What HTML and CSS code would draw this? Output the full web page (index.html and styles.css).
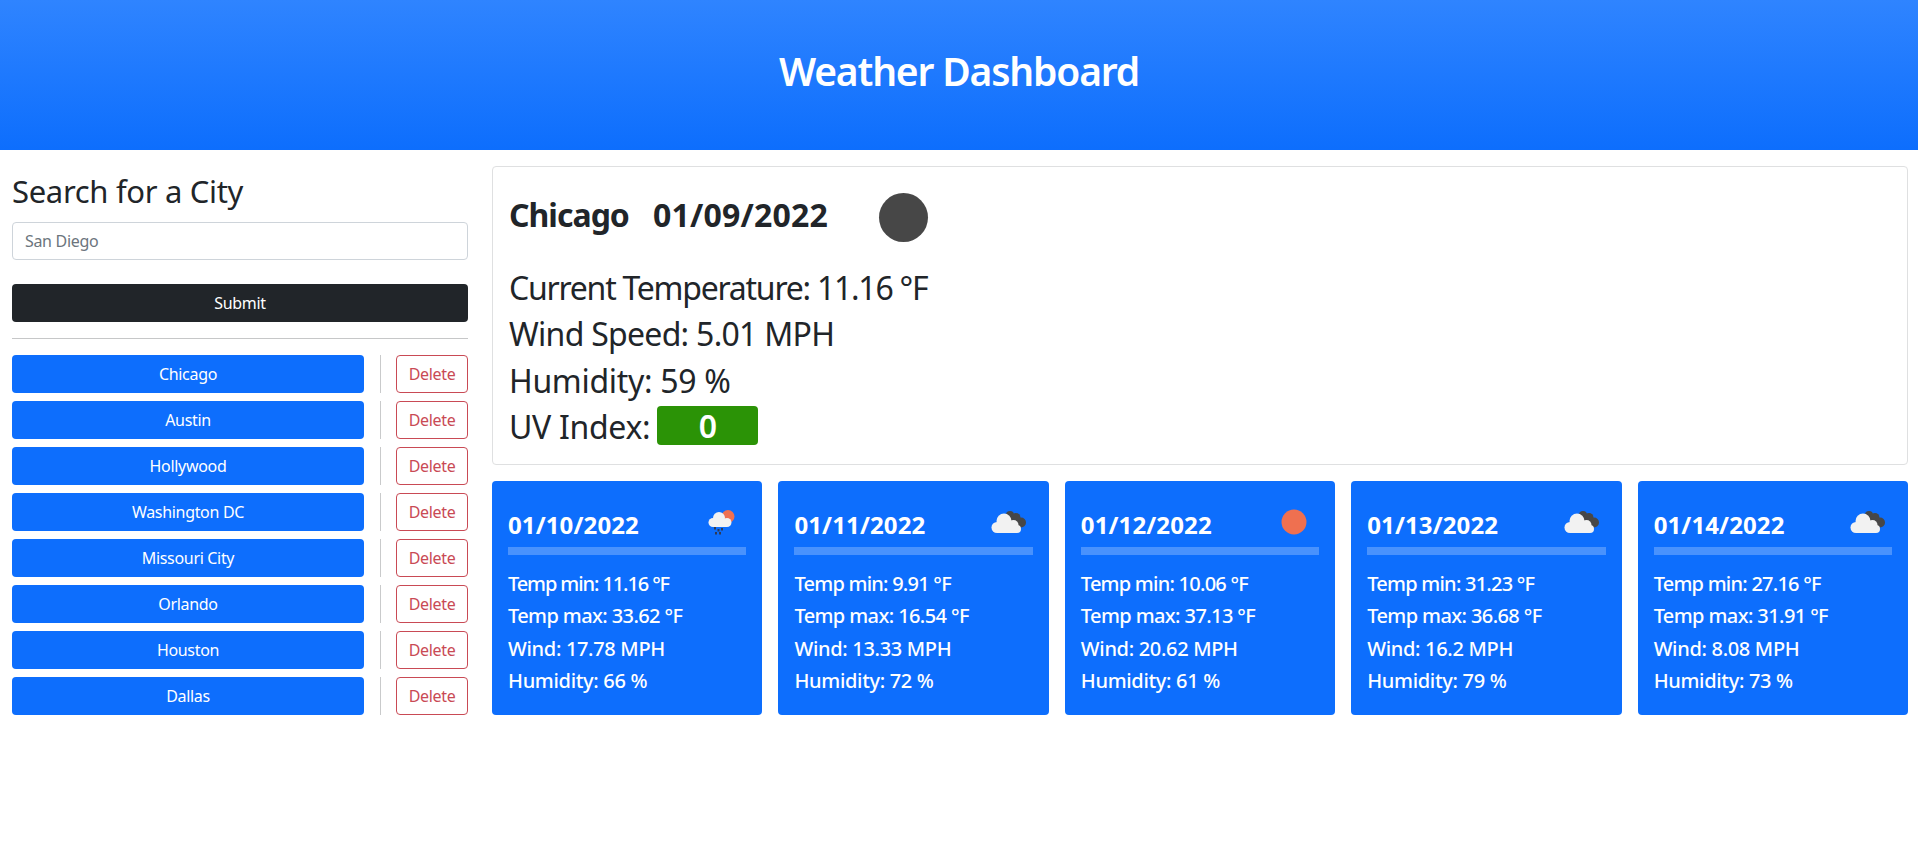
FILE: index.html
```html
<!DOCTYPE html>
<html lang="en">
<head>
<meta charset="utf-8">
<title>Weather Dashboard</title>
<link rel="stylesheet" href="styles.css">
</head>
<body>
<svg class="defs" width="0" height="0" aria-hidden="true">
  <defs>
    <g id="overcast">
      <g fill="#474747"><circle cx="21" cy="9" r="4"/><circle cx="27" cy="11.500" r="4.500"/><circle cx="32" cy="16.500" r="5"/><rect x="20" y="10" width="10" height="10"/></g>
      <g fill="#f2f2f2"><circle cx="8" cy="21.500" r="5.500"/><circle cx="15" cy="15" r="7.500"/><circle cx="24.500" cy="19" r="5"/><circle cx="28" cy="23" r="4"/><rect x="8" y="16" width="20" height="11"/></g>
    </g>
  </defs>
</svg>
<header class="hero"><h1>Weather Dashboard</h1></header>
<div class="layout">
  <aside class="side">
    <h3 class="side-title">Search for a City</h3>
    <div class="field">San Diego</div>
    <button class="submit">Submit</button>
    <hr class="rule">
    <ul class="cities">
      <li class="city"><button class="city-btn">Chicago</button><span class="vr"></span><button class="del">Delete</button></li>
      <li class="city"><button class="city-btn">Austin</button><span class="vr"></span><button class="del">Delete</button></li>
      <li class="city"><button class="city-btn">Hollywood</button><span class="vr"></span><button class="del">Delete</button></li>
      <li class="city"><button class="city-btn">Washington DC</button><span class="vr"></span><button class="del">Delete</button></li>
      <li class="city"><button class="city-btn">Missouri City</button><span class="vr"></span><button class="del">Delete</button></li>
      <li class="city"><button class="city-btn">Orlando</button><span class="vr"></span><button class="del">Delete</button></li>
      <li class="city"><button class="city-btn">Houston</button><span class="vr"></span><button class="del">Delete</button></li>
      <li class="city"><button class="city-btn">Dallas</button><span class="vr"></span><button class="del">Delete</button></li>
    </ul>
  </aside>
  <main class="main">
    <section class="current">
      <div class="current-head">
        <h3 class="current-title"><span class="name">Chicago</span><span class="date">01/09/2022</span></h3>
        <span class="moon"></span>
      </div>
      <p class="stat tight">Current Temperature: 11.16 °F</p>
      <p class="stat snug">Wind Speed: 5.01 MPH</p>
      <p class="stat">Humidity: 59 %</p>
      <p class="stat">UV Index: <span class="uv">0</span></p>
    </section>
    <section class="forecast">
      <article class="day">
        <div class="day-head"><h4>01/10/2022</h4>
          <svg class="ico" viewBox="0 0 40 32"><circle cx="26" cy="10.500" r="6.500" fill="#ef7050"/><g fill="#f2f2f2"><circle cx="11" cy="16.500" r="4.500"/><circle cx="17" cy="12" r="6"/><circle cx="25" cy="16.500" r="4.500"/><rect x="11" y="14" width="14" height="7"/></g><g fill="#2f3a55"><rect x="12" y="21" width="2" height="2.500"/><rect x="15.500" y="23" width="2" height="2.500"/><rect x="19" y="22" width="2" height="2.500"/><rect x="13" y="26" width="2" height="2.500"/><rect x="17" y="26" width="2" height="2.500"/></g></svg>
        </div>
        <hr class="day-rule">
        <p class="temp-min narrow">Temp min: 11.16 °F</p><p class="temp-max">Temp max: 33.62 °F</p><p>Wind: 17.78 MPH</p><p>Humidity: 66 %</p>
      </article>
      <article class="day">
        <div class="day-head"><h4>01/11/2022</h4>
          <svg class="ico" viewBox="0 0 40 32"><use href="#overcast"/></svg>
        </div>
        <hr class="day-rule">
        <p class="temp-min">Temp min: 9.91 °F</p><p class="temp-max">Temp max: 16.54 °F</p><p>Wind: 13.33 MPH</p><p>Humidity: 72 %</p>
      </article>
      <article class="day">
        <div class="day-head"><h4>01/12/2022</h4>
          <svg class="ico" viewBox="0 0 40 32"><circle cx="19" cy="16" r="12.500" fill="#ef7050"/></svg>
        </div>
        <hr class="day-rule">
        <p class="temp-min">Temp min: 10.06 °F</p><p class="temp-max">Temp max: 37.13 °F</p><p>Wind: 20.62 MPH</p><p>Humidity: 61 %</p>
      </article>
      <article class="day">
        <div class="day-head"><h4>01/13/2022</h4>
          <svg class="ico" viewBox="0 0 40 32"><use href="#overcast"/></svg>
        </div>
        <hr class="day-rule">
        <p class="temp-min">Temp min: 31.23 °F</p><p class="temp-max">Temp max: 36.68 °F</p><p>Wind: 16.2 MPH</p><p>Humidity: 79 %</p>
      </article>
      <article class="day">
        <div class="day-head"><h4>01/14/2022</h4>
          <svg class="ico" viewBox="0 0 40 32"><use href="#overcast"/></svg>
        </div>
        <hr class="day-rule">
        <p class="temp-min">Temp min: 27.16 °F</p><p class="temp-max">Temp max: 31.91 °F</p><p>Wind: 8.08 MPH</p><p>Humidity: 73 %</p>
      </article>
    </section>
  </main>
</div>
</body>
</html>
```

FILE: styles.css
```css
* { box-sizing: border-box; }
html, body { margin: 0; padding: 0; }
body {
  font-family: "Noto Sans", "Open Sans", sans-serif;
  color: #212529;
  background: #fff;
  font-size: 16px;
  letter-spacing: -0.02em;
}
.defs { position: absolute; }
button { font: inherit; letter-spacing: inherit; cursor: pointer; }
.hero {
  height: 150px;
  background: linear-gradient(180deg, #2f84ff 0%, #0d6efd 100%);
  display: flex;
  align-items: center;
  justify-content: center;
  color: #fff;
}
.hero h1 { margin: 0 0 9px; font-size: 39px; font-weight: 600; line-height: 48px; letter-spacing: -0.03em; }
.layout { display: flex; align-items: flex-start; }
.side { width: 480px; flex: none; padding: 24px 12px 0; }
.side-title { margin: 0 0 14px; font-size: 31px; font-weight: 400; line-height: 34px; }
.field {
  height: 38px;
  border: 1px solid #ced4da;
  border-radius: 4px;
  padding: 0 12px;
  line-height: 36px;
  color: #6c757d;
  margin-bottom: 24px;
}
.submit {
  display: block;
  width: 100%;
  height: 38px;
  background: #212529;
  color: #fff;
  border: 0;
  border-radius: 4px;
}
.rule { margin: 16px 0; border: 0; border-top: 1px solid #c6c7c8; }
.cities { list-style: none; margin: 0; padding: 0; display: flex; flex-direction: column; gap: 8px; }
.city { display: flex; height: 38px; }
.city-btn { flex: none; width: 352px; background: #0d6efd; color: #fff; border: 0; border-radius: 4px; }
.vr { flex: none; width: 1px; margin: 0 15px 0 16px; background: #c9cacb; }
.del { flex: 1; background: #fff; border: 1px solid #c94a55; color: #c94a55; border-radius: 4px; padding: 0; }
.main { flex: 1; min-width: 0; padding: 16px 10px 0 12px; }
.current { height: 299px; border: 1px solid #dfe0e1; border-radius: 4px; padding: 16px; }
.current-head { display: flex; align-items: center; height: 66px; margin-bottom: 16px; }
.current-title { margin: 0 0 2px; font-size: 32px; font-weight: 700; line-height: 40px; display: flex; gap: 24px; }
.name { letter-spacing: -0.031em; }
.date { letter-spacing: 0.007em; }
.moon { width: 49px; height: 49px; border-radius: 50%; background: #474747; margin-left: 51px; margin-top: 2px; }
.stat { margin: 0; font-size: 32px; font-weight: 450; line-height: 46.300px; }
.stat.tight { letter-spacing: -0.039em; }
.stat.snug { letter-spacing: -0.0225em; }
.uv {
  display: inline-block;
  width: 101px;
  height: 39px;
  margin-left: -1px;
  background: #2b9306;
  color: #fff;
  border-radius: 4px;
  text-align: center;
  font-weight: 600;
  line-height: 39px;
  vertical-align: 1px;
}
.forecast { display: flex; gap: 16px; margin-top: 16px; }
.day { flex: 1 1 0; height: 234px; background: #0d6efd; color: #fff; border-radius: 4px; padding: 16px; }
.day-head { display: flex; justify-content: space-between; align-items: center; height: 50px; }
.day-head h4 { margin: 0; font-size: 24px; font-weight: 700; line-height: 32px; padding-top: 6px; letter-spacing: 0.005em; }
.ico { width: 40px; height: 32px; margin-right: 4px; }
.day-rule { height: 8px; margin: 0 0 13px; border: 0; background: rgba(255,255,255,.25); }
.day p { margin: 0; font-size: 20px; font-weight: 500; line-height: 32.300px; }
.day p.temp-min { letter-spacing: -0.038em; }
.day p.temp-min.narrow { letter-spacing: -0.055em; }
.day p.temp-max { letter-spacing: -0.03em; }
```
